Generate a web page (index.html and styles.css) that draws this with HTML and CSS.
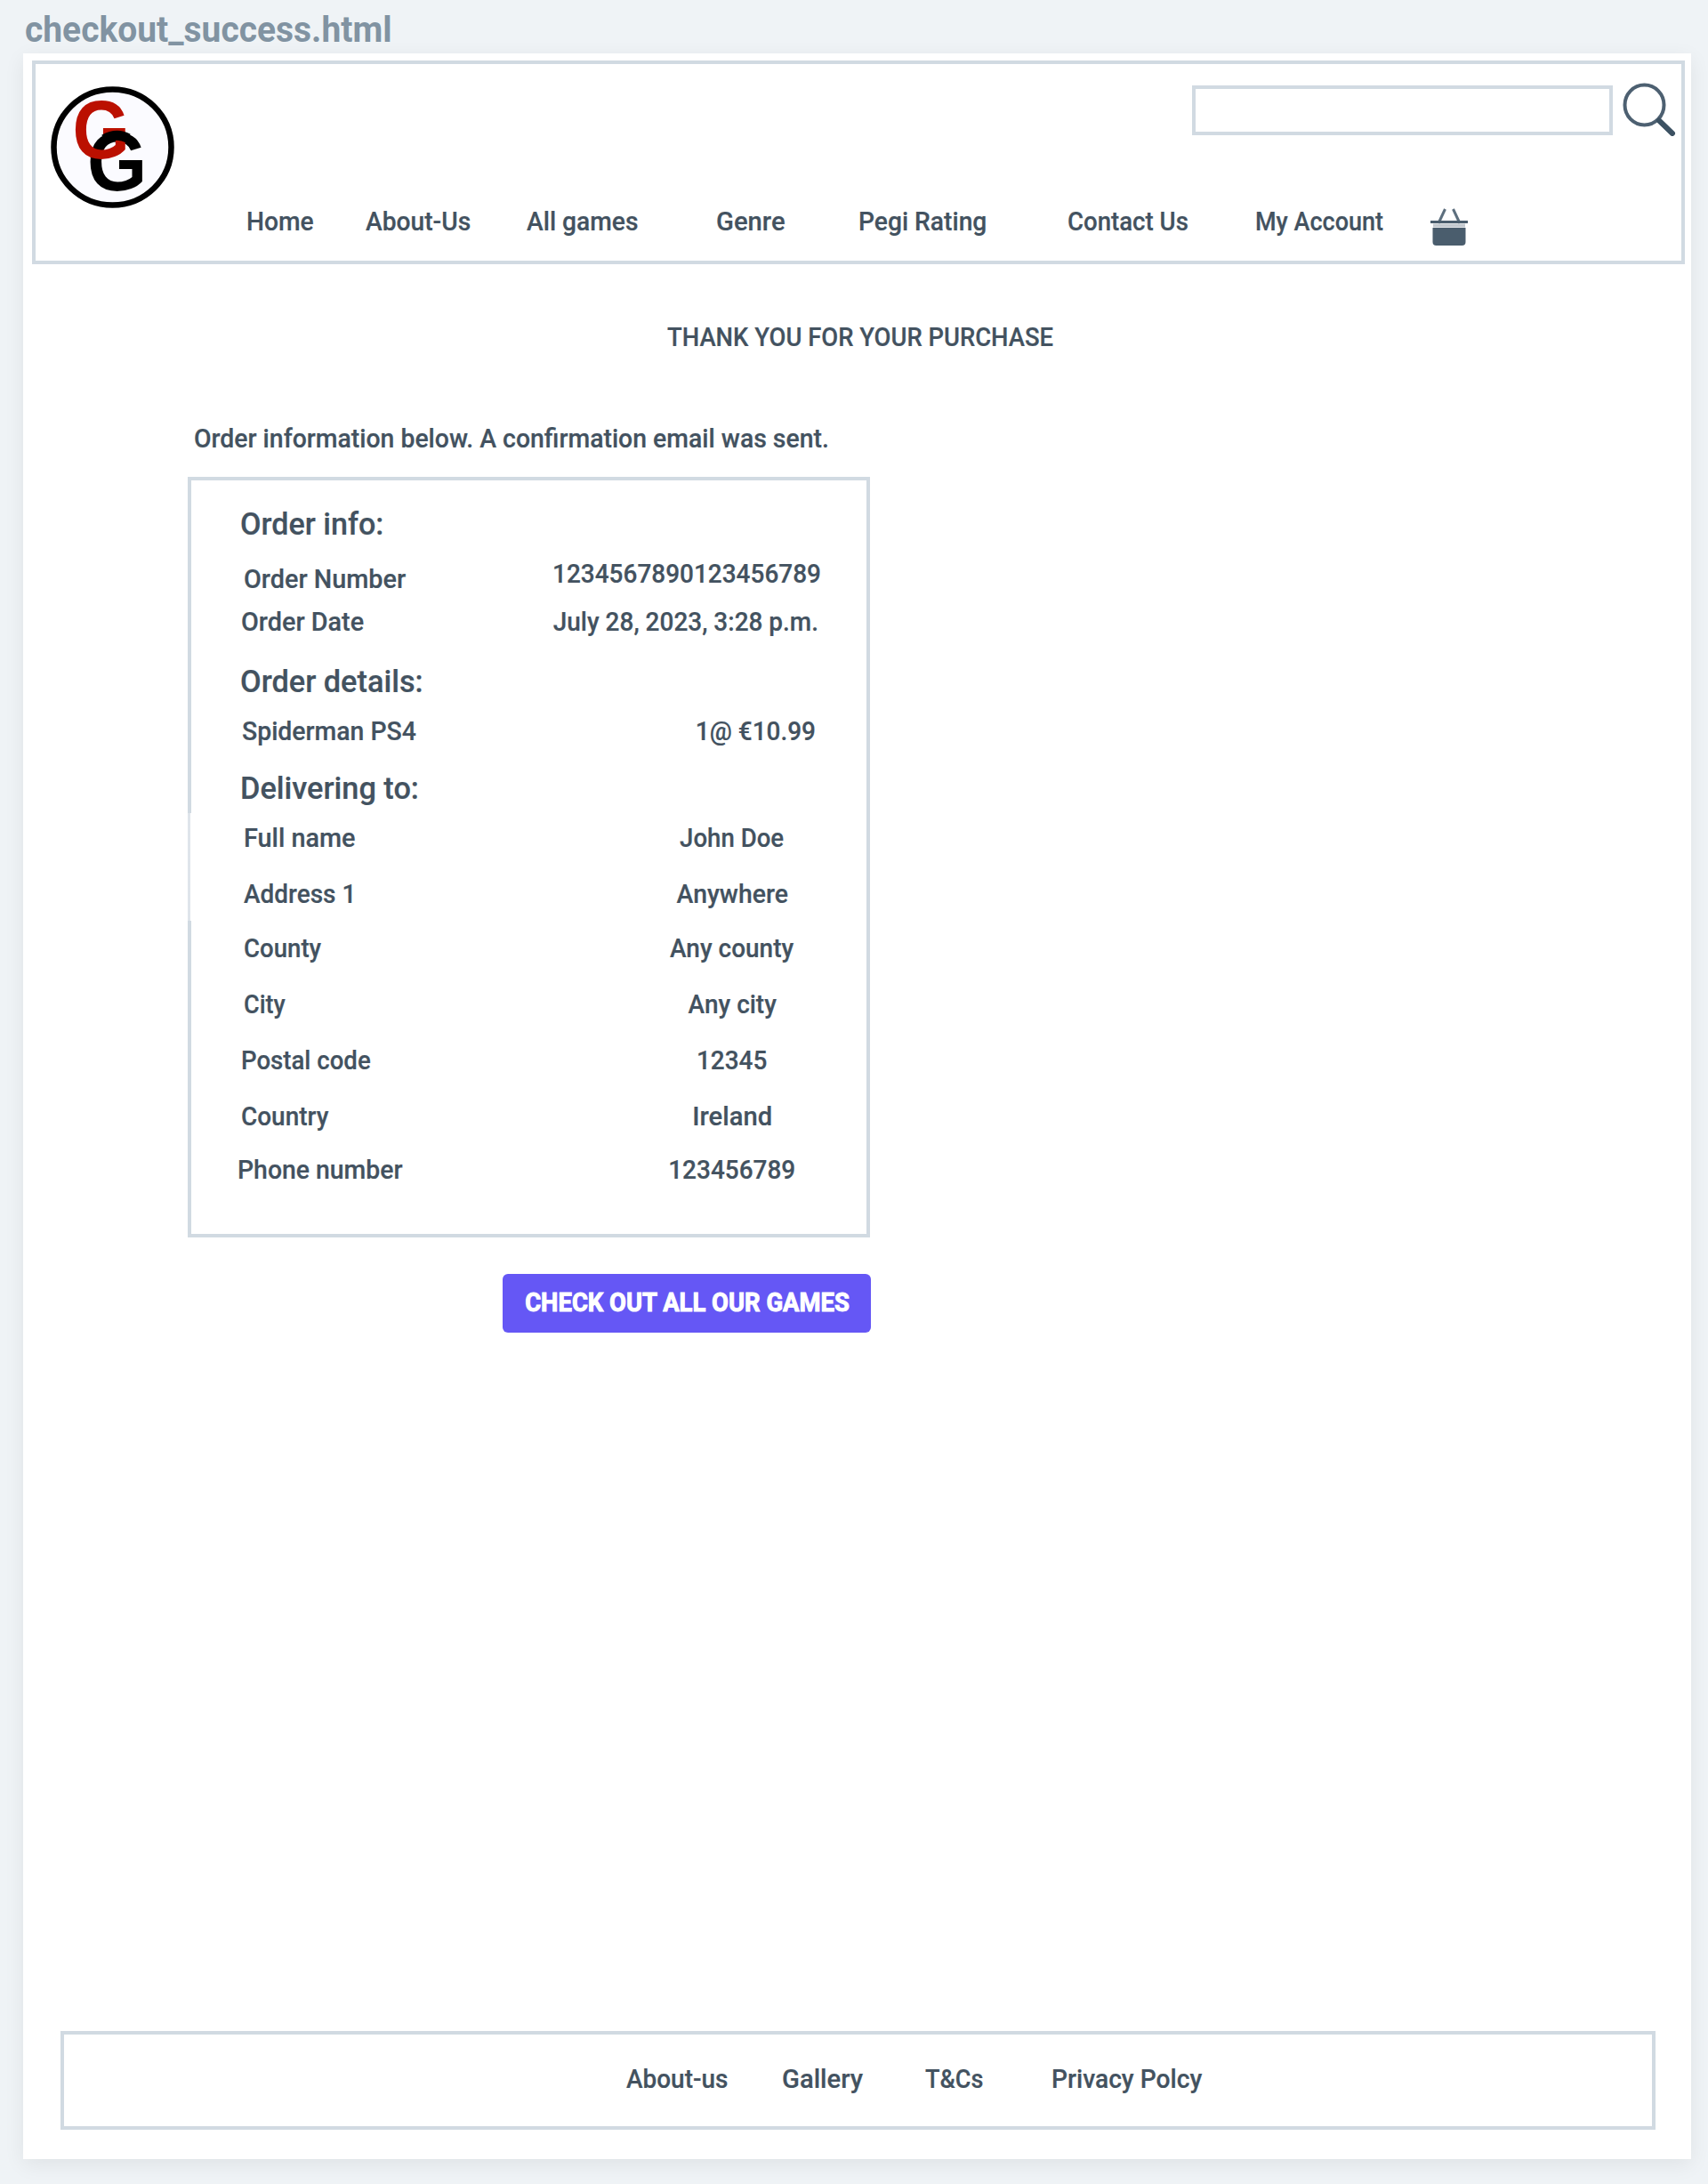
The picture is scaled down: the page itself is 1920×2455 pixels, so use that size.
FILE: index.html
```html
<!DOCTYPE html>
<html lang="en">
<head>
<meta charset="utf-8">
<title>checkout_success.html</title>
<link rel="stylesheet" href="styles.css">
</head>
<body>
<h1 class="file-name"><span class="t fit-974">checkout_success.html</span></h1>
<div class="card">
  <header class="site-header">
    <div class="top-bar">
      <svg class="logo" width="139" height="137" viewBox="0 0 139 137" aria-label="GG">
        <ellipse cx="69.5" cy="68.5" rx="66" ry="65" fill="#fbfbff" stroke="#000" stroke-width="6.500"/>
        <text class="logo-g" transform="translate(41 116.500) scale(.93 1)">G</text>
        <text class="logo-g red" transform="translate(24.500 80.500) scale(.89 1)">G</text>
        <path d="M60 59.500Q74 51.500 87 58.500" fill="none" stroke="#000" stroke-width="11"/>
      </svg>
      <input class="search" type="text" aria-label="Search">
      <svg class="search-icon" width="60" height="60" viewBox="0 0 60 60">
        <ellipse cx="24.5" cy="25" rx="22" ry="22.5" fill="none" stroke="#4d6071" stroke-width="4"/>
        <path d="M41 42.500L56 57" stroke="#3c5162" stroke-width="6" stroke-linecap="round"/>
      </svg>
    </div>
    <nav class="nav">
      <a class="t fit-94">Home</a>
      <a class="t fit-94">About-Us</a>
      <a class="t fit-94">All games</a>
      <a class="t fit-974">Genre</a>
      <a class="t fit-94">Pegi Rating</a>
      <a class="t fit-92">Contact Us</a>
      <a class="t fit-90">My Account</a>
      <svg class="basket" width="42" height="44" viewBox="0 0 42 44">
        <path d="M16.500 1L9 17M25.500 1L33 17" stroke="#5d6f7e" stroke-width="3" fill="none"/>
        <path d="M0 15.500H42" stroke="#4a5d6d" stroke-width="3"/>
        <path d="M3 19.500H39" stroke="#c3c9cf" stroke-width="4"/>
        <path d="M2.500 22H39.500V38Q39.500 42 35.500 42H6.500Q2.500 42 2.500 38Z" fill="#4a5d6d"/>
      </svg>
    </nav>
  </header>
  <main>
    <h2 class="thanks"><span class="t fit-914">THANK YOU FOR YOUR PURCHASE</span></h2>
    <p class="intro"><span class="t fit-947">Order information below. A confirmation email was sent.</span></p>
    <section class="order">
      <h3><span class="t fit-974">Order info:</span></h3>
      <div class="row in-3"><span class="t fit-96">Order Number</span><span class="t value raised fit-932">1234567890123456789</span></div>
      <div class="row"><span class="t fit-96">Order Date</span><span class="t value date fit-932">July 28, 2023, 3:28 p.m.</span></div>
      <h3><span class="t fit-98">Order details:</span></h3>
      <div class="row in-1"><span class="t fit-947">Spiderman PS4</span><span class="t value price fit-932">1@ €10.99</span></div>
      <h3><span class="t fit-98">Delivering to:</span></h3>
      <div class="row in-3"><span class="t fit-96">Full name</span><span class="center"><span class="t fit-92">John Doe</span></span></div>
      <div class="row in-3"><span class="t fit-932">Address 1</span><span class="center"><span class="t fit-947">Anywhere</span></span></div>
      <div class="row in-3"><span class="t fit-92">County</span><span class="center"><span class="t fit-932">Any county</span></span></div>
      <div class="row in-3"><span class="t fit-90">City</span><span class="center"><span class="t fit-932">Any city</span></span></div>
      <div class="row"><span class="t fit-92">Postal code</span><span class="center"><span class="t fit-932">12345</span></span></div>
      <div class="row"><span class="t fit-932">Country</span><span class="center"><span class="t fit-974">Ireland</span></span></div>
      <div class="row out-4"><span class="t fit-947">Phone number</span><span class="center"><span class="t fit-932">123456789</span></span></div>
    </section>
    <button class="cta"><span class="t fit-914">CHECK OUT ALL OUR GAMES</span></button>
  </main>
  <footer class="site-footer">
    <a class="t fit-932">About-us</a>
    <a class="t fit-974">Gallery</a>
    <a class="t fit-90">T&amp;Cs</a>
    <a class="t fit-94">Privacy Polcy</a>
  </footer>
</div>
</body>
</html>
```
FILE: styles.css
```css
* { box-sizing: border-box; }

body {
  margin: 0;
  height: 2455px;
  background: #eff3f6;
  color: #435260;
  font: 500 30px/30px Roboto, sans-serif;
  -webkit-text-stroke: .2px currentColor;
}

h1, h2, h3, p { margin: 0; font-weight: 500; }

/* Slightly condensed text */
.t {
  display: inline-block;
  white-space: nowrap;
  transform-origin: left center;
  transform: scaleX(var(--fit));
}
.fit-90 { --fit: .9; }
.fit-914 { --fit: .914; }
.fit-92 { --fit: .92; }
.fit-932 { --fit: .932; }
.fit-94 { --fit: .94; }
.fit-947 { --fit: .946; }
.fit-96 { --fit: .96; }
.fit-974 { --fit: .974; }
.fit-98 { --fit: .98; }

.file-name {
  height: 60px;
  padding: 12px 0 0 28px;
  font-size: 40px;
  font-weight: 700;
  line-height: 44px;
  color: #8193a2;
  -webkit-text-stroke: 0;
}

.card {
  display: flex;
  flex-direction: column;
  width: 1875px;
  height: 2367px;
  margin-left: 26px;
  padding: 7px 0 32px;
  background: #fff;
  box-shadow: 0 6px 22px rgba(0, 0, 0, .07);
}

.site-header {
  width: 1858px;
  height: 229px;
  margin: 1px 0 0 10px;
  border: 4px solid #d1dae2;
}
.top-bar {
  display: flex;
  align-items: flex-start;
  height: 162px;
  padding: 21px 6px 0 17px;
}
.logo { margin-top: 4px; }
.logo-g {
  font: bold 93px "Liberation Sans", sans-serif;
  fill: #000;
  -webkit-text-stroke: 0;
}
.logo-g.red { fill: #bb1000; }
.search {
  width: 473px;
  height: 56px;
  margin: 3px 11px 0 auto;
  border: 4px solid #d1dae2;
  border-radius: 0;
  background: #fff;
}
.nav {
  display: grid;
  grid-template-columns: 134.500px 180.500px 213px 160px 235.500px 211px 197px auto;
  align-items: start;
  padding-left: 236.500px;
}

.thanks { margin: 67px 0 0 724px; font-size: 30px; line-height: 30px; }
.intro { margin: 84px 0 0 192px; }

.order {
  position: relative;
  display: grid;
  grid-template-rows: 64px 47.500px 65.500px 58px 61.500px 58.500px 63px 60.500px 63.500px 63px 63px 60px auto;
  align-items: start;
  width: 767px;
  height: 855px;
  margin: 28px 0 0 185px;
  padding: 32px 51px 0 55px;
  border: 4px solid #d1dae2;
}
/* Faded stretch of the left border beside the first delivery rows */
.order::before {
  content: "";
  position: absolute;
  left: -4px;
  top: 374px;
  width: 4px;
  height: 121px;
  background: linear-gradient(90deg, rgba(255, 255, 255, .3) 0 3px, #fff 3px);
}
.order h3 { font-size: 35px; line-height: 36px; }
.row { display: flex; justify-content: space-between; padding-left: 1px; }
.in-1 { padding-left: 1.500px; }
.in-3 { padding-left: 4px; }
.out-4 { margin-left: -4px; }
.value { transform-origin: right center; }
.raised { margin: -6px .5px 0 0; }
.date { margin-right: 3px; }
.price { margin-right: 5.500px; }
.center { width: 200px; text-align: center; }
.center .t { transform-origin: center; }

.cta {
  display: block;
  width: 414px;
  height: 66px;
  margin: 41px 0 0 539px;
  padding: 0 0 2px;
  border: 0;
  border-radius: 6px;
  background: #6557f5;
  color: #fff;
  font: 700 30px/30px Roboto, sans-serif;
  -webkit-text-stroke: 1px #fff;
}
.cta .t { transform-origin: center; }

.site-footer {
  display: grid;
  grid-template-columns: 175px 161px 142px auto;
  width: 1793px;
  height: 111px;
  margin: auto 0 1px 42px;
  padding: 35px 0 0 632px;
  border: 4px solid #d1dae2;
}
```
